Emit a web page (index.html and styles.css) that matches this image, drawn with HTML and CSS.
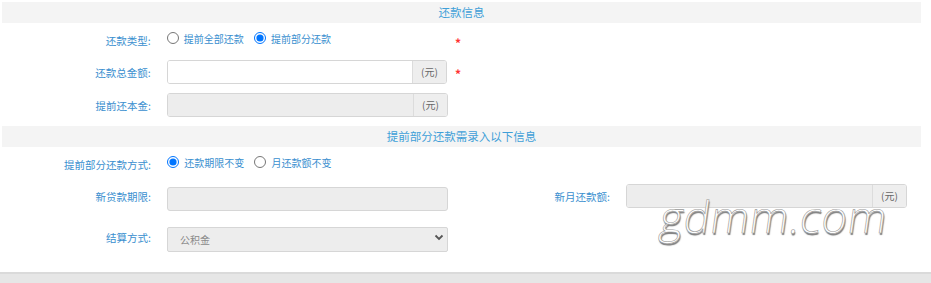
FILE: index.html
```html
<!DOCTYPE html>
<html lang="zh-CN">
<head>
    <meta charset="UTF-8">
    <title>还款信息</title>
    <link rel="stylesheet" href="styles.css">
</head>
<body>

    <div class="page">
        <div class="section-title">还款信息</div>

        <!-- 还款类型 -->
        <div class="row row-type">
            <div class="group">
                <label class="label">还款类型:</label>
                <div class="control radios">
                    <label class="radio"><input type="radio" name="payType"> 提前全部还款</label>
                    <label class="radio"><input type="radio" name="payType" checked> 提前部分还款</label>
                </div>
                <span class="star low">*</span>
            </div>
        </div>

        <div class="row row-field">
            <div class="group">
                <label class="label">还款总金额:</label>
                <div class="control input-group">
                    <input type="text" class="input">
                    <span class="addon">(元)</span>
                </div>
                <span class="star">*</span>
            </div>
        </div>

        <div class="row row-field">
            <div class="group">
                <label class="label">提前还本金:</label>
                <div class="control input-group">
                    <input type="text" class="input" disabled>
                    <span class="addon">(元)</span>
                </div>
            </div>
        </div>

        <div class="section-title second">提前部分还款需录入以下信息</div>

        <div class="row row-type">
            <div class="group">
                <label class="label">提前部分还款方式:</label>
                <div class="control radios">
                    <label class="radio"><input type="radio" name="partType" checked> 还款期限不变</label>
                    <label class="radio"><input type="radio" name="partType"> 月还款额不变</label>
                </div>
            </div>
        </div>

        <div class="row row-field">
            <div class="group">
                <label class="label">新贷款期限:</label>
                <div class="control">
                    <input type="text" class="input single" disabled>
                </div>
            </div>
            <div class="group">
                <label class="label">新月还款额:</label>
                <div class="control input-group">
                    <input type="text" class="input" disabled>
                    <span class="addon">(元)</span>
                </div>
            </div>
        </div>

        <div class="row row-select">
            <div class="group">
                <label class="label">结算方式:</label>
                <div class="control select-wrap">
                    <select class="select" disabled>
                        <option>公积金</option>
                    </select>
                    <svg class="chevron" width="10" height="7" viewBox="0 0 10 7">
                        <path d="M1.5 1.5 L5 5 L8.5 1.5" fill="none" stroke="#555" stroke-width="1.8"/>
                    </svg>
                </div>
            </div>
        </div>

        <div class="watermark">gdmm.com</div>
    </div>

    <div class="footer-bar"></div>

</body>
</html>
```

FILE: styles.css
```css
* {
    margin: 0;
    padding: 0;
    box-sizing: border-box;
}

body {
    font-family: "Noto Sans CJK SC", "Noto Sans", sans-serif;
    background: #fff;
    width: 931px;
    height: 283px;
    overflow: hidden;
}

.page {
    position: relative;
    padding: 2px 10px 0 2px;
    height: 272px;
}

/* Section headers */
.section-title {
    height: 21px;
    line-height: 21px;
    background: #f4f4f4;
    color: #3f9fd8;
    font-size: 11.5px;
    text-align: center;
}

.section-title.second {
    margin-top: 9px;
}

/* Form rows */
.row {
    display: flex;
}

.row-type {
    height: 24px;
    margin-top: 3px;
    margin-bottom: 10px;
}

.row-field {
    height: 24px;
    margin-bottom: 9px;
}

.row-select {
    height: 25px;
    margin-top: 17px;
}

.group {
    width: 459px;
    display: flex;
    align-items: center;
    flex-shrink: 0;
}

.label {
    width: 149px;
    text-align: right;
    color: #3a8fcf;
    font-size: 10.5px;
}

.row-type .label {
    padding-top: 4px;
}

.control {
    margin-left: 16px;
    width: 281px;
    height: 24px;
}

/* Radios */
.radios {
    display: flex;
    align-items: center;
    height: 20px;
}

.radio {
    display: flex;
    align-items: center;
    color: #3a8fcf;
    font-size: 10px;
    margin-right: 10px;
    white-space: pre;
}

.radio input {
    width: 12px;
    height: 12px;
    margin: 0 3px 0 0;
}

.star {
    color: #f33;
    font-size: 12px;
    font-weight: bold;
    margin-left: 8px;
    padding-top: 3px;
}

.star.low {
    padding-top: 8px;
}

/* Inputs */
.input-group {
    display: flex;
    border: 1px solid #d6d6d6;
    border-radius: 3px;
    overflow: hidden;
}

.input {
    flex: 1;
    height: 100%;
    border: none;
    outline: none;
    background: #fff;
    padding: 0 8px;
    font-family: inherit;
    font-size: 10px;
}

.input:disabled {
    background: #ededed;
}

.input.single {
    width: 100%;
    border: 1px solid #d6d6d6;
    border-radius: 3px;
}

.addon {
    width: 34px;
    background: #eee;
    border-left: 1px solid #dcdcdc;
    color: #666;
    font-size: 10px;
    text-align: center;
    line-height: 22px;
}

/* Select */
.select-wrap {
    position: relative;
    height: 25px;
}

.select {
    width: 100%;
    height: 100%;
    appearance: none;
    -webkit-appearance: none;
    background: #ededed;
    border: 1px solid #d6d6d6;
    border-radius: 2px;
    color: #8a8a8a;
    font-family: inherit;
    font-size: 10px;
    padding-left: 12px;
    opacity: 1;
}

.chevron {
    position: absolute;
    right: 4px;
    top: 9px;
}

/* Watermark stamped over the picture */
.watermark {
    position: absolute;
    left: 661px;
    top: 186px;
    font-family: "Open Sans", sans-serif;
    font-weight: 300;
    font-size: 44px;
    letter-spacing: 0.5px;
    color: #fff;
    transform: skewX(-8deg);
    -webkit-text-stroke: 0.6px #999;
    text-shadow: 1px 2px 1px #7a7a7a;
}

.footer-bar {
    height: 11px;
    background: #e6e6e6;
    border-top: 2px solid #dadada;
}
```
